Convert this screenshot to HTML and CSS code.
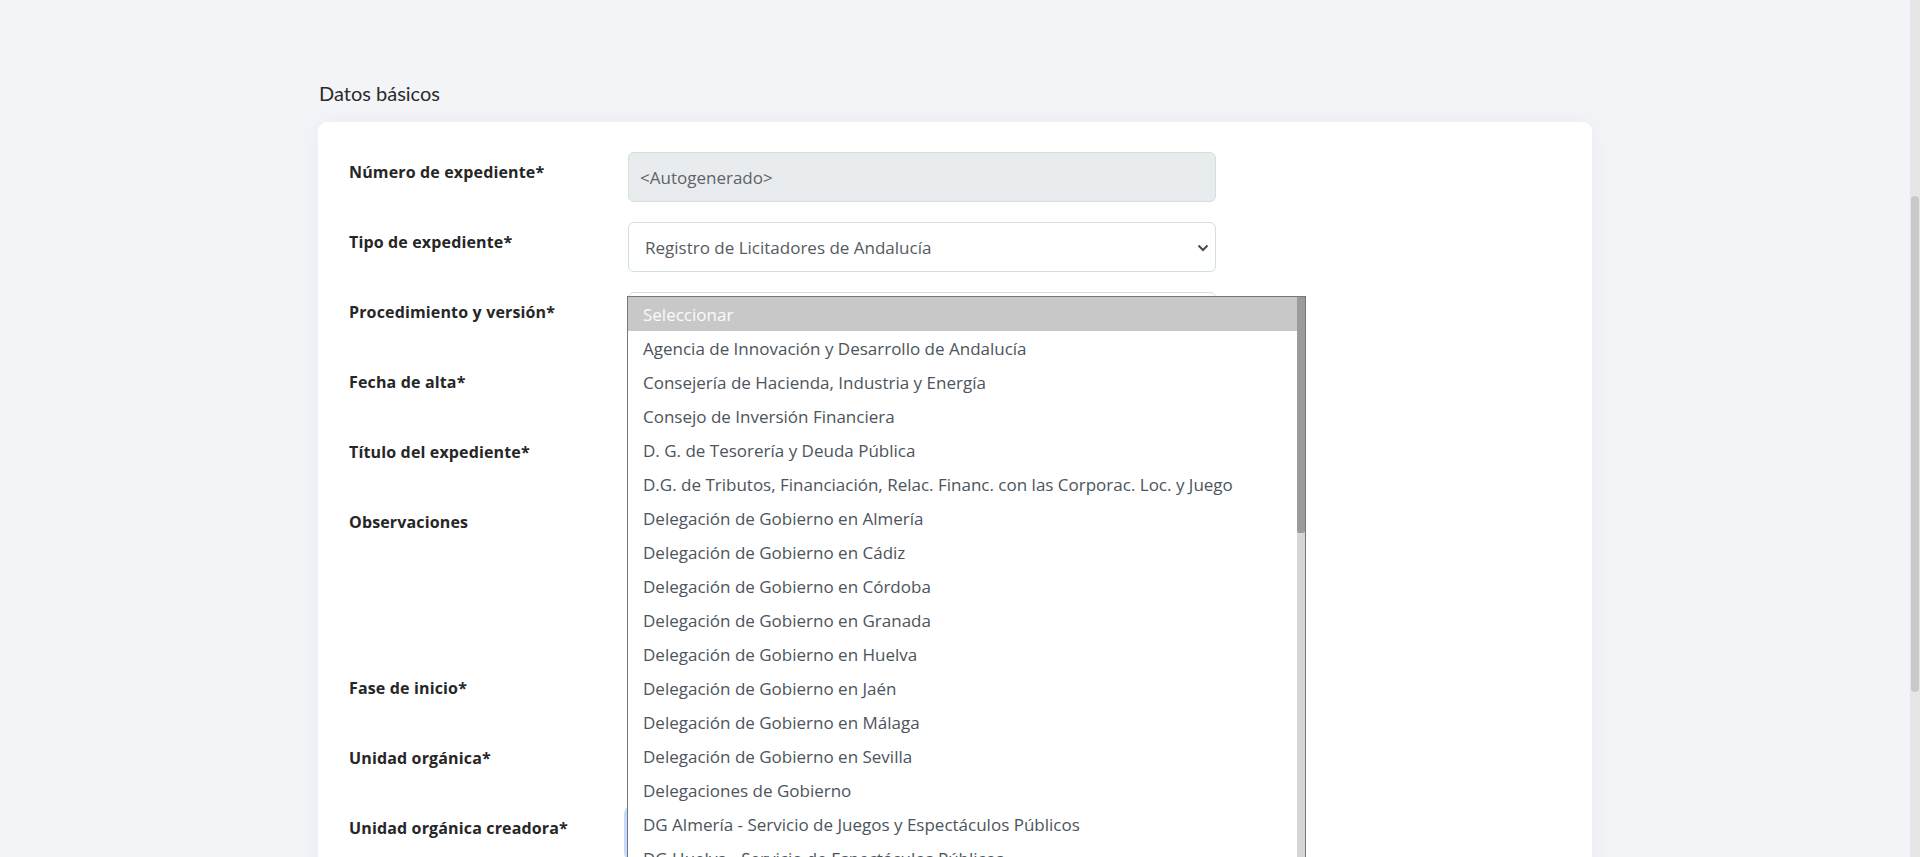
FILE: index.html
```html
<!DOCTYPE html>
<html lang="es">
<head>
<meta charset="utf-8">
<title>Datos básicos</title>
<link rel="stylesheet" href="styles.css">
</head>
<body>
<div class="viewport">
  <main class="page">
    <section class="section">
      <h2 class="section-title">Datos básicos</h2>
      <div class="card">
        <div class="form-grid">
          <div class="label">Número de expediente*</div>
          <div class="field"><div class="control control-disabled">&lt;Autogenerado&gt;</div></div>

          <div class="label">Tipo de expediente*</div>
          <div class="field"><div class="control control-select"><span>Registro de Licitadores de Andalucía</span><svg class="chevron" viewBox="0 0 12 8" width="12" height="8"><path d="M1.5 1.5 6 6l4.5-4.5" fill="none" stroke="#4a4a4a" stroke-width="2"/></svg></div></div>

          <div class="label">Procedimiento y versión*</div>
          <div class="field field-open">
            <div class="control control-select"><span></span><svg class="chevron" viewBox="0 0 12 8" width="12" height="8"><path d="M1.5 1.5 6 6l4.5-4.5" fill="none" stroke="#4a4a4a" stroke-width="2"/></svg></div>
            <div class="dropdown">
              <ul class="dropdown-list">
                <li class="option option-active">Seleccionar</li>
                <li class="option">Agencia de Innovación y Desarrollo de Andalucía</li>
                <li class="option">Consejería de Hacienda, Industria y Energía</li>
                <li class="option">Consejo de Inversión Financiera</li>
                <li class="option">D. G. de Tesorería y Deuda Pública</li>
                <li class="option">D.G. de Tributos, Financiación, Relac. Financ. con las Corporac. Loc. y Juego</li>
                <li class="option">Delegación de Gobierno en Almería</li>
                <li class="option">Delegación de Gobierno en Cádiz</li>
                <li class="option">Delegación de Gobierno en Córdoba</li>
                <li class="option">Delegación de Gobierno en Granada</li>
                <li class="option">Delegación de Gobierno en Huelva</li>
                <li class="option">Delegación de Gobierno en Jaén</li>
                <li class="option">Delegación de Gobierno en Málaga</li>
                <li class="option">Delegación de Gobierno en Sevilla</li>
                <li class="option">Delegaciones de Gobierno</li>
                <li class="option">DG Almería - Servicio de Juegos y Espectáculos Públicos</li>
                <li class="option">DG Huelva - Servicio de Espectáculos Públicos</li>
                <li class="option">DG Jaén - Servicio de Juegos y Espectáculos Públicos</li>
              </ul>
              <div class="dropdown-scroll"><div class="dropdown-thumb"></div></div>
            </div>
          </div>

          <div class="label">Fecha de alta*</div>
          <div class="field"><div class="control"></div></div>

          <div class="label">Título del expediente*</div>
          <div class="field"><div class="control"></div></div>

          <div class="label">Observaciones</div>
          <div class="field"><div class="control control-textarea"></div></div>

          <div class="label">Fase de inicio*</div>
          <div class="field"><div class="control control-select"><span></span></div></div>

          <div class="label">Unidad orgánica*</div>
          <div class="field"><div class="control control-select"><span></span></div></div>

          <div class="label">Unidad orgánica creadora*</div>
          <div class="field"><div class="control control-select control-focus"><span></span></div></div>
        </div>
      </div>
    </section>
  </main>
  <div class="page-scroll"><div class="page-thumb"></div></div>
</div>
</body>
</html>
```
FILE: styles.css
```css
html, body {
  margin: 0;
  padding: 0;
}

body {
  background: #f3f4f8;
  font-family: "Open Sans", "Lato", sans-serif;
  color: #222;
}

.viewport {
  display: flex;
  height: 857px;
  overflow: hidden;
}

.page {
  flex: 1;
  min-width: 0;
  padding-top: 81px;
}

.section {
  width: 1274px;
  margin: 0 auto;
}

.section-title {
  margin: 0 0 17px 1px;
  font-family: "Lato", "Open Sans", sans-serif;
  font-size: 20px;
  line-height: 24px;
  font-weight: 400;
  color: #2b2b2b;
}

.card {
  background: #fff;
  border-radius: 9px;
  box-shadow: 0 0 24px rgba(40, 50, 90, 0.04);
  padding: 30px 31px 40px;
}

.form-grid {
  display: grid;
  grid-template-columns: 279px 588px;
  row-gap: 20px;
}

.label {
  padding-top: 8px;
  font-size: 16px;
  line-height: 24px;
  font-weight: 700;
  color: #262626;
  letter-spacing: 0.15px;
}

.field {
  position: relative;
}

.control {
  box-sizing: border-box;
  height: 50px;
  border: 1px solid #cfe2d4;
  border-radius: 6px;
  background: #fff;
  font-size: 17px;
  line-height: 24px;
  color: #555b61;
}

.control-disabled {
  display: flex;
  align-items: center;
  background: #e9ecef;
  padding: 2px 11px 0;
  color: #5e6368;
}

.control-select {
  display: flex;
  align-items: center;
  justify-content: space-between;
  padding: 2px 6px 0 16px;
}

.chevron {
  display: block;
}

.control-textarea {
  height: 146px;
}

.control-focus {
  border-color: #86b7fe;
  box-shadow: 0 0 0 4px rgba(13, 110, 253, 0.25);
}

.dropdown {
  position: absolute;
  top: 4px;
  left: -1px;
  z-index: 5;
  width: 679px;
  height: 620px;
  box-sizing: border-box;
  display: flex;
  border: 1px solid #777;
  background: #fff;
}

.dropdown-list {
  flex: 1;
  margin: 0;
  padding: 0;
  list-style: none;
  overflow: hidden;
}

.option {
  box-sizing: border-box;
  height: 34px;
  padding: 1px 0 0 15px;
  font-size: 17px;
  line-height: 33px;
  color: #4c545c;
  white-space: nowrap;
}

.option-active {
  background: #c8c8c8;
  color: #fbfbfb;
}

.dropdown-scroll {
  width: 8px;
  background: #d6d6d6;
}

.dropdown-thumb {
  height: 236px;
  background: #9b9b9b;
  border-radius: 0 0 2px 2px;
}

.page-scroll {
  width: 10px;
  background: #e6e6e6;
  padding-top: 196px;
  box-sizing: border-box;
}

.page-thumb {
  height: 496px;
  margin: 0 1px;
  border-radius: 4px;
  background: #c9c9c9;
}
```
